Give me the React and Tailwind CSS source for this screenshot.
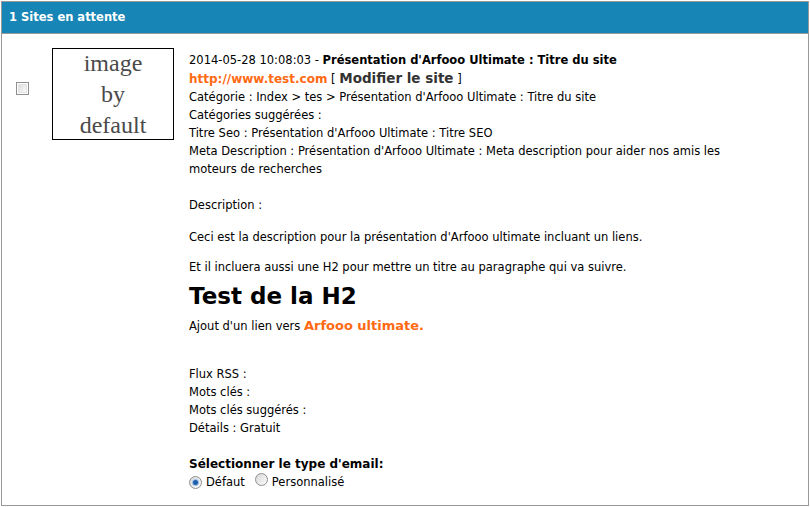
export default function App() {
  const Radio = ({ checked }) => (
    <span className="inline-flex w-[13px] h-[13px] rounded-full border border-[#8e8f8f] bg-gradient-to-br from-[#d8d8d8] to-[#fbfbfb] items-center justify-center shrink-0">
      {checked && (
        <span className="w-[7px] h-[7px] rounded-full bg-[#9cc4ec] flex items-center justify-center">
          <span className="w-[5px] h-[5px] rounded-full bg-[#1e5fa8]" />
        </span>
      )}
    </span>
  );
  return (
    <div className="ml-px mt-px w-[808px] h-[505px] border border-[#999] bg-white text-black text-[11.5px] font-['DejaVu_Sans',Verdana,sans-serif]">
      <div className="h-[32px] bg-[#1785b5] border-b border-[#999] pl-[7px] font-bold text-white text-[11.5px] leading-[31px]">
        1 Sites en attente
      </div>
      <div className="flex pt-[14px]">
        <div className="ml-[14px] mt-[34px] w-[13px] h-[13px] border border-[#8e8f8f] p-px shrink-0 self-start">
          <div className="w-full h-full border border-[#e4e4e4] bg-gradient-to-br from-[#dcdcdc] to-[#fafafa]" />
        </div>
        <div className="ml-[23px] w-[122px] h-[92px] border border-black flex flex-col items-center justify-center shrink-0 font-['Liberation_Serif',serif] text-[24px] leading-[31px] text-[#4a4a4a]">
          <span>image</span>
          <span>by</span>
          <span>default</span>
        </div>
        <div className="ml-[15px] mt-[3px] w-[545px] leading-[18px]">
          <div>
            2014-05-28 10:08:03 - <b>Présentation d'Arfooo Ultimate : Titre du site</b>
          </div>
          <div>
            <span className="text-[#ff6a13] font-bold text-[12px]">http://www.test.com</span> [{" "}
            <span className="font-bold text-[13.5px] text-[#333]">Modifier le site</span> ]
          </div>
          <div>Catégorie : Index &gt; tes &gt; Présentation d'Arfooo Ultimate : Titre du site</div>
          <div>Catégories suggérées :</div>
          <div>Titre Seo : Présentation d'Arfooo Ultimate : Titre SEO</div>
          <div>
            Meta Description : Présentation d'Arfooo Ultimate : Meta description pour aider nos amis les moteurs de recherches
          </div>
          <div className="h-[18px]" />
          <div>Description :</div>
          <p className="mt-[14px]">Ceci est la description pour la présentation d'Arfooo ultimate incluant un liens.</p>
          <p className="mt-[12px]">Et il incluera aussi une H2 pour mettre un titre au paragraphe qui va suivre.</p>
          <h2 className="font-bold text-[23px] leading-[41px]">Test de la H2</h2>
          <p>
            Ajout d'un lien vers <span className="text-[#ff6a13] font-bold text-[13px]">Arfooo ultimate.</span>
          </p>
          <div className="h-[30px]" />
          <div>Flux RSS :</div>
          <div>Mots clés :</div>
          <div>Mots clés suggérés :</div>
          <div>Détails : Gratuit</div>
          <div className="h-[18px]" />
          <div className="font-bold text-[12px]">Sélectionner le type d'email:</div>
          <div className="flex items-center">
            <Radio checked />
            <span className="ml-[4px]">Défaut</span>
            <span className="ml-[10px]"><Radio /></span>
            <span className="ml-[4px]">Personnalisé</span>
          </div>
        </div>
      </div>
    </div>
  );
}
